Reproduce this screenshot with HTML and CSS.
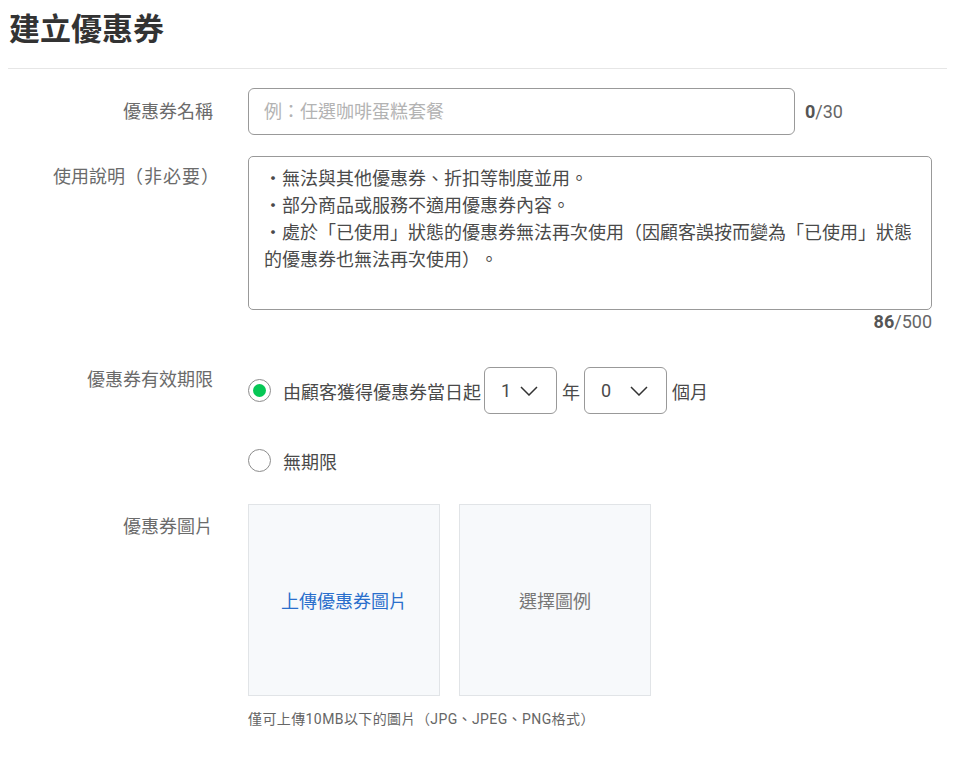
FILE: index.html
```html
<!DOCTYPE html>
<html lang="zh-Hant">

<head>
    <meta charset="UTF-8">
    <meta name="viewport" content="width=device-width, initial-scale=1.0">
    <title>建立優惠券</title>
    <link rel="stylesheet" href="styles.css">
</head>

<body>
    <h1 class="page-title">建立優惠券</h1>

    <div class="form">
        <!-- 名稱 -->
        <div class="row">
            <div class="label label-mid">優惠券名稱</div>
            <div class="field name-field">
                <div class="text-input placeholder">例：任選咖啡蛋糕套餐</div>
                <span class="counter"><b>0</b>/30</span>
            </div>
        </div>

        <!-- 使用說明 -->
        <div class="row">
            <div class="label label-text">使用說明<span class="paren">（非必要）</span></div>
            <div class="field">
                <div class="textarea">・無法與其他優惠券、折扣等制度並用。<br>・部分商品或服務不適用優惠券內容。<br>・處於「已使用」狀態的優惠券無法再次使用（因顧客誤按而變為「已使用」狀態的優惠券也無法再次使用）。</div>
                <div class="counter counter-right"><b>86</b>/500</div>
            </div>
        </div>

        <!-- 有效期限 -->
        <div class="row row-period">
            <div class="label label-period">優惠券有效期限</div>
            <div class="field">
                <div class="radio-line">
                    <span class="radio checked"></span>
                    <span class="radio-text">由顧客獲得優惠券當日起</span>
                    <div class="select select-year">
                        <span>1</span>
                        <svg class="chevron" width="18" height="10" viewBox="0 0 18 10"><path d="M1 1l8 8 8-8" fill="none" stroke="#333" stroke-width="1.5" /></svg>
                    </div>
                    <span class="unit">年</span>
                    <div class="select select-month">
                        <span>0</span>
                        <svg class="chevron" width="18" height="10" viewBox="0 0 18 10"><path d="M1 1l8 8 8-8" fill="none" stroke="#333" stroke-width="1.5" /></svg>
                    </div>
                    <span class="unit">個月</span>
                </div>
                <div class="radio-line">
                    <span class="radio"></span>
                    <span class="radio-text">無期限</span>
                </div>
            </div>
        </div>

        <!-- 圖片 -->
        <div class="row row-image">
            <div class="label label-image">優惠券圖片</div>
            <div class="field">
                <div class="image-boxes">
                    <div class="image-box upload">上傳優惠券圖片</div>
                    <div class="image-box sample">選擇圖例</div>
                </div>
                <p class="hint">僅可上傳10MB以下的圖片（JPG、JPEG、PNG格式）</p>
            </div>
        </div>
    </div>
</body>

</html>
```

FILE: styles.css
```css
/* 基本 */
body {
    margin: 8px;
    font-family: Roboto, "Noto Sans CJK TC", sans-serif;
    font-size: 18px;
    color: #555;
    background-color: #fff;
    text-spacing-trim: space-all;
}

.page-title {
    margin: 0 -7px 0 0;
    padding: 2px 0 0 1px;
    height: 58px;
    line-height: 40px;
    font-size: 31px;
    font-weight: bold;
    color: #333;
    border-bottom: 1px solid #e6e6e6;
}

/* 表單 */
.form {
    padding-top: 19px;
}

.row {
    display: flex;
    gap: 35px;
    margin-bottom: 21px;
}

.label {
    width: 205px;
    flex-shrink: 0;
    text-align: right;
    color: #6b6b6b;
    line-height: 24px;
}

.label-mid {
    line-height: 47px;
}

.label-text {
    padding-top: 9px;
}

.label-text .paren {
    letter-spacing: 1px;
    margin-right: -7px;
}

.label-period {
    padding-top: 1px;
}

.label-image {
    padding-top: 11px;
}

.field {
    width: 684px;
}

.name-field {
    display: flex;
    align-items: center;
}

.text-input {
    box-sizing: border-box;
    width: 547px;
    height: 47px;
    line-height: 45px;
    padding: 0 15px;
    border: 1px solid #999;
    border-radius: 6px;
}

.placeholder {
    color: #b3b3b3;
}

.counter {
    margin-left: 10px;
    color: #666;
    line-height: 24px;
}

.counter b {
    color: #555;
}

.counter-right {
    margin-left: 0;
    text-align: right;
}

.textarea {
    box-sizing: border-box;
    height: 154px;
    padding: 8px 15px;
    border: 1px solid #999;
    border-radius: 5px;
    line-height: 27px;
    color: #4a4a4a;
}

/* 有效期限 */
.row-period {
    margin-top: 33px;
    margin-bottom: 20px;
}

.radio-line {
    display: flex;
    align-items: center;
    height: 47px;
    margin-bottom: 23px;
}

.radio-line:last-child {
    margin-bottom: 0;
}

.radio {
    box-sizing: border-box;
    width: 23px;
    height: 23px;
    border: 1px solid #8c8c8c;
    border-radius: 50%;
    display: flex;
    align-items: center;
    justify-content: center;
    margin-right: 12px;
    flex-shrink: 0;
}

.radio.checked::after {
    content: "";
    width: 13px;
    height: 13px;
    border-radius: 50%;
    background-color: #06c755;
}

.radio-text {
    color: #4a4a4a;
    margin-right: 3px;
}

.select {
    box-sizing: border-box;
    height: 47px;
    display: flex;
    align-items: center;
    justify-content: space-between;
    padding: 0 18px 0 16px;
    border: 1px solid #999;
    border-radius: 6px;
    color: #4a4a4a;
}

.select-year {
    width: 73px;
}

.select-month {
    width: 83px;
}

.unit {
    margin: 0 4px 0 5px;
    color: #4a4a4a;
}

/* 圖片 */
.image-boxes {
    display: flex;
    gap: 19px;
}

.image-box {
    box-sizing: border-box;
    width: 192px;
    height: 192px;
    display: flex;
    align-items: center;
    justify-content: center;
    background-color: #f7f9fb;
    border: 1px solid #e1e4e7;
}

.upload {
    color: #2a6fcc;
}

.sample {
    color: #777;
}

.hint {
    margin: 13px 0 0;
    font-size: 14px;
    line-height: 20px;
    letter-spacing: 0.4px;
    color: #666;
}
```
